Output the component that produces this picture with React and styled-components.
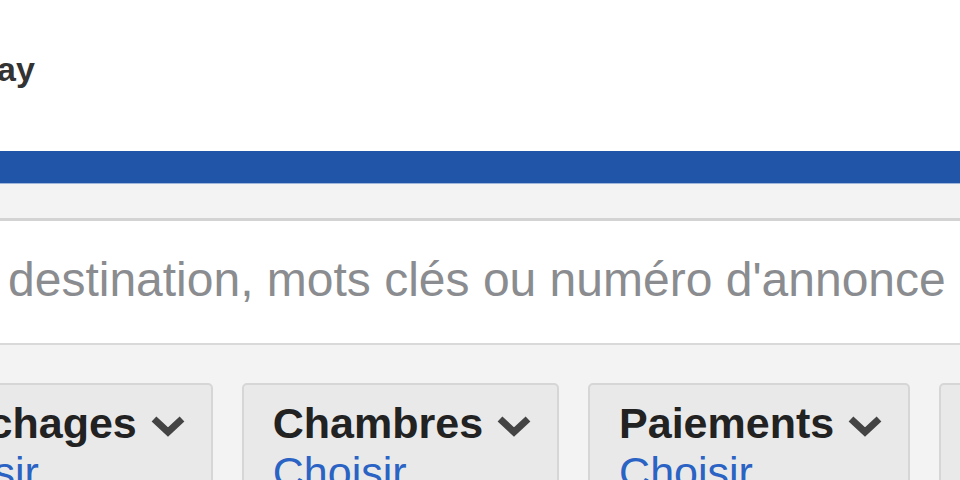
import React from "react";
import styled, { createGlobalStyle } from "styled-components";

const GlobalStyle = createGlobalStyle`
  html, body {
    margin: 0;
    padding: 0;
    background: #f3f3f3;
    font-family: "Liberation Sans", Arial, Helvetica, sans-serif;
    overflow: hidden;
  }
`;

const Page = styled.div`
  width: 960px;
  height: 480px;
  overflow: hidden;
  display: flex;
  flex-direction: column;
`;

const Header = styled.header`
  height: 151px;
  box-sizing: border-box;
  padding-top: 51px;
  background: #fff;
  flex-shrink: 0;
`;

const Logo = styled.div`
  font-size: 34px;
  line-height: 36px;
  font-weight: bold;
  color: #333;
  margin-left: -3px;
`;

const NavBar = styled.nav`
  height: 32px;
  background: #2055a8;
  border-bottom: 1px solid #9fb6dc;
  flex-shrink: 0;
`;

const SubBar = styled.div`
  height: 34px;
  background: #f3f3f3;
  border-bottom: 3px solid #d4d3d4;
  flex-shrink: 0;
`;

const SearchArea = styled.div`
  height: 124px;
  box-sizing: border-box;
  padding: 31px 0 0 8px;
  background: #fff;
  border-bottom: 2px solid #d9d9d9;
  flex-shrink: 0;
`;

const SearchInput = styled.input`
  width: 1100px;
  height: 56px;
  padding: 0;
  border: none;
  outline: none;
  background: transparent;
  font-family: "Liberation Sans", Arial, Helvetica, sans-serif;
  font-size: 48px;
  line-height: 56px;
  color: #333;

  &::placeholder {
    color: #8a8c90;
  }
`;

const FilterRow = styled.div`
  display: flex;
  gap: 29px;
  padding-top: 38px;
  margin-left: -126px;
`;

const FilterCard = styled.div`
  flex-shrink: 0;
  background: #e9e9e9;
  border: 2px solid #d6d6d6;
  border-radius: 5px;
  padding: 13px 26px 0 29px;
  height: 130px;
  box-sizing: border-box;
`;

const FilterTitle = styled.div`
  display: flex;
  align-items: center;
  gap: 14px;
  font-size: 43px;
  line-height: 50px;
  font-weight: bold;
  color: #222;
  white-space: nowrap;
`;

const FilterLink = styled.a`
  display: block;
  font-size: 43px;
  line-height: 48px;
  color: #2a63c4;
  text-decoration: none;
  cursor: pointer;
`;

function Chevron() {
  return (
    <svg width="34" height="24" viewBox="0 0 34 24" style={{ marginTop: 6 }}>
      <polyline
        points="3,5 17,18 31,5"
        fill="none"
        stroke="#444"
        strokeWidth="7"
        strokeLinejoin="miter"
      />
    </svg>
  );
}

const filters = ["Couchages", "Chambres", "Paiements", "Équipements"];

export default function App() {
  return (
    <>
      <GlobalStyle />
      <Page>
        <Header>
          <Logo>ay</Logo>
        </Header>
        <NavBar />
        <SubBar />
        <SearchArea>
          <SearchInput placeholder="destination, mots clés ou numéro d'annonce" />
        </SearchArea>
        <FilterRow>
          {filters.map((f) => (
            <FilterCard key={f}>
              <FilterTitle>
                {f}
                <Chevron />
              </FilterTitle>
              <FilterLink>Choisir</FilterLink>
            </FilterCard>
          ))}
        </FilterRow>
      </Page>
    </>
  );
}
